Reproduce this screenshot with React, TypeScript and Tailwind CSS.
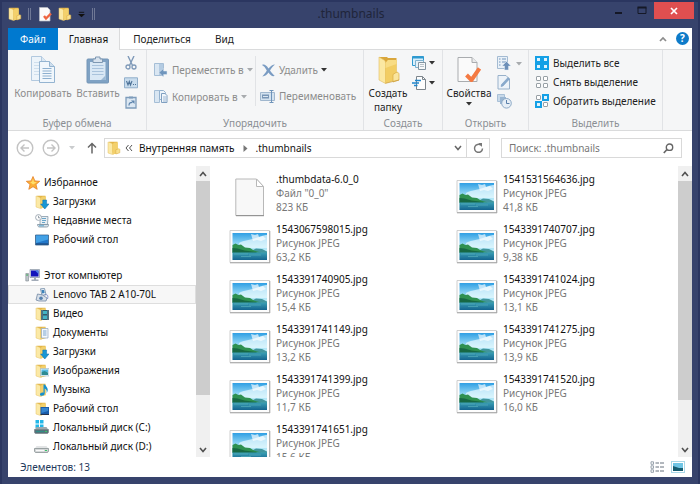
import { ReactNode } from "react";

type FolderKind = "plain" | "download" | "video" | "docs" | "pictures" | "music" | "desktop";

const favorites = [
  { label: "Загрузки", icon: <SmallFolder kind="download" /> },
  { label: "Недавние места", icon: <RecentIcon /> },
  { label: "Рабочий стол", icon: <DesktopIcon /> },
];

const computer = [
  { label: "Lenovo TAB 2 A10-70L", icon: <TabletIcon />, selected: true },
  { label: "Видео", icon: <SmallFolder kind="video" /> },
  { label: "Документы", icon: <SmallFolder kind="docs" /> },
  { label: "Загрузки", icon: <SmallFolder kind="download" /> },
  { label: "Изображения", icon: <SmallFolder kind="pictures" /> },
  { label: "Музыка", icon: <SmallFolder kind="music" /> },
  { label: "Рабочий стол", icon: <SmallFolder kind="desktop" /> },
  { label: "Локальный диск (C:)", icon: <DiskIcon system /> },
  { label: "Локальный диск (D:)", icon: <DiskIcon /> },
];

const files = [
  { name: ".thumbdata-6.0_0", type: 'Файл "0_0"', size: "823 КБ" },
  { name: "1541531564636.jpg", type: "Рисунок JPEG", size: "41,8 КБ" },
  { name: "1543067598015.jpg", type: "Рисунок JPEG", size: "63,2 КБ" },
  { name: "1543391740707.jpg", type: "Рисунок JPEG", size: "9,38 КБ" },
  { name: "1543391740905.jpg", type: "Рисунок JPEG", size: "15,4 КБ" },
  { name: "1543391741024.jpg", type: "Рисунок JPEG", size: "13,1 КБ" },
  { name: "1543391741149.jpg", type: "Рисунок JPEG", size: "13,2 КБ" },
  { name: "1543391741275.jpg", type: "Рисунок JPEG", size: "13,9 КБ" },
  { name: "1543391741399.jpg", type: "Рисунок JPEG", size: "11,7 КБ" },
  { name: "1543391741520.jpg", type: "Рисунок JPEG", size: "16,0 КБ" },
  { name: "1543391741651.jpg", type: "Рисунок JPEG", size: "15,6 КБ" },
];

/* Icons */

function SmallFolder({ kind = "plain" }: { kind?: FolderKind }) {
  return (
    <svg width="14" height="14" viewBox="0 0 14 14">
      <path d="M2 .8h8.500v10.700L6 13.500z" fill="#e2b548" />
      <path d="M1 1l3.500 1.200c.7.300 1 .8 1 1.500v9.800L1 12z" fill="#fbe9a6" stroke="#e6c265" strokeWidth=".5" />
      <path d="M5.500 3L7.500 1.500h3.300v10.800l-5.300 1.200z" fill="#f3d06b" />
      {kind === "plain" && <path d="M8.800 8.800l2.700-1c.8-.2 1.300.2 1.300 1v3l-4 1.200z" fill="#fae08e" stroke="#d7a93e" strokeWidth=".5" />}
      {kind === "download" && <path d="M7.800 5h3.800v4H14l-4.200 5-4.200-5h2.200z" fill="#1897d4" stroke="#0b6fae" strokeWidth=".5" />}
      {kind === "video" && (
        <>
          <path d="M6 3h8v10H6z" fill="#31596b" />
          <path d="M8 4h4v3H8zM8 8.500h4v3.500H8z" fill="#45b4c4" />
          <path d="M7 3.500v9.500M13 3.500v9.500" stroke="#dfe9ec" strokeWidth=".7" strokeDasharray="1 1" />
        </>
      )}
      {kind === "docs" && (
        <>
          <path d="M6.500 2.500h6.500v9.500H6.500z" fill="#f4f8fc" stroke="#8ca5bf" strokeWidth=".7" />
          <path d="M8 5h3.500M8 7h3.500M8 9h3.500" stroke="#5b8fc4" strokeWidth=".8" />
        </>
      )}
      {kind === "pictures" && (
        <>
          <path d="M5.500 4.500H14V12H5.500z" fill="#e8f5fb" stroke="#9ab6c6" strokeWidth=".6" />
          <path d="M6.500 5.500H13V8H6.500z" fill="#56bbe2" />
          <path d="M6.500 8l3-1 3.500 1.500V11H6.500z" fill="#2d8b93" />
        </>
      )}
      {kind === "music" && (
        <path d="M8.500 1.500v8.200c-2-.6-3.700.5-3.500 2 .3 1.700 4.700 1.300 4.700-1.200V5.500c2 1 2.300 2.500 1.800 4.500C14 7 12.500 4.500 9.700 1.500z" fill="#1590cf" />
      )}
      {kind === "desktop" && (
        <>
          <path d="M5.500 5H14v7.500H5.500z" fill="#1a5ca8" />
          <path d="M6.500 6H13v3l-6.500 2z" fill="#3585d0" />
          <path d="M5.500 12h8.500v1H5.500z" fill="#26344d" />
        </>
      )}
    </svg>
  );
}

function RecentIcon() {
  return (
    <svg width="14" height="14" viewBox="0 0 14 14">
      <path d="M5 2.500h8l-.5 8H5z" fill="#e7eef3" stroke="#8799a8" strokeWidth=".8" />
      <path d="M7 4.500h4M7 6.500h4M7 8.500h3" stroke="#6aa5c9" />
      <circle cx="3.500" cy="3.500" r="2.900" fill="#fff" stroke="#98a4ae" strokeWidth=".9" />
      <path d="M3.500 1.800v2H5" fill="none" stroke="#6d7a86" strokeWidth=".7" />
      <path d="M2.500 10.500h11v1c0 1-1 1.500-2 1.500h-7c-1.200 0-2-1-2-2.500z" fill="#d9e3ea" stroke="#7b8e9d" strokeWidth=".8" />
      <path d="M4 11.800h5" stroke="#5ba5cf" />
    </svg>
  );
}

function DesktopIcon() {
  return (
    <svg width="14" height="14" viewBox="0 0 14 14">
      <path d="M.5 2h13v10H.5z" fill="#2277c9" stroke="#3a6389" strokeWidth=".8" />
      <path d="M1 2.500h12v4L1 10z" fill="#42a1e6" />
      <path d="M1 11h12" stroke="#1c3f6a" />
    </svg>
  );
}

function TabletIcon() {
  return (
    <svg width="14" height="14" viewBox="0 0 14 14">
      <path d="M5.500.8l4-.3 1.500 6-4 1z" fill="#e9f0f6" stroke="#6f89a4" strokeWidth=".8" />
      <path d="M6.500 2h2.500l.7 3-2.500.5z" fill="#3e83ba" />
      <path d="M2.500 6l5 1 4.500 3-1 3H4l-3-1z" fill="#d7dfe8" stroke="#7389a5" strokeWidth=".8" />
      <circle cx="6" cy="10.300" r="1.800" fill="#537fae" />
      <path d="M9.500 7c3-1 4 .5 3 4" fill="none" stroke="#6c7fc0" strokeWidth=".8" />
    </svg>
  );
}

function DiskIcon({ system = false }: { system?: boolean }) {
  return (
    <svg width="15" height="15" viewBox="0 0 15 15">
      {system && <path d="M1.500 0h3.500v3.500H1.500zM6 0h3.500v3.500H6zM1.500 4.500h3.500V8H1.500zM6 4.500h3.500V8H6z" fill="#22b7e8" />}
      <path d="M2.500 7h10l2 3H.5z" fill={system ? "#9ca9ae" : "#e2e4e5"} />
      <path d="M.5 9.500h14v2.500c0 1-.8 1.500-1.500 1.500H2c-.8 0-1.500-.5-1.500-1.500z" fill={system ? "#57717a" : "#d1d4d5"} stroke="#7d8688" strokeWidth=".7" />
      <path d="M2 11.500h8" stroke={system ? "#318c86" : "#f9f9f9"} strokeWidth="1.200" />
      <path d="M11 11.500h2" stroke="#35c567" strokeWidth="1.200" />
    </svg>
  );
}

function StarIcon() {
  return (
    <svg width="14" height="14" viewBox="0 0 14 14">
      <path d="M7 .5l1.900 4.400 4.800.4L10 8.500l1.200 4.800L7 10.700l-4.200 2.600L4 8.500.3 5.300l4.800-.4z" fill="#fbaf36" stroke="#e5812a" strokeWidth=".8" />
      <path d="M7 2.500l1 3.500 3 .3-4 2.200-3-2.500 2-.2z" fill="#ffdf6c" />
    </svg>
  );
}

function ComputerIcon() {
  return (
    <svg width="15" height="14" viewBox="0 0 15 14">
      <path d="M5 .5h9.500v8H5z" fill="#d7dde5" stroke="#8893a3" strokeWidth=".7" />
      <path d="M6 1.500h7.500v6H6z" fill="#1414bb" />
      <path d="M10 1.500h3.500V5z" fill="#4e83e4" />
      <path d="M9 8.500h2v2H9zM6.500 10.500h7V12h-7z" fill="#a3acb8" />
      <path d="M.8 4.500h2.700V12H.8z" fill="#c0c7cc" stroke="#7d878e" strokeWidth=".6" />
      <path d="M1.500 6h1.200" stroke="#2eaa4a" strokeWidth="1.500" />
    </svg>
  );
}

function PropertiesSmall() {
  return (
    <svg width="13" height="15" viewBox="0 0 13 15">
      <path d="M.5.5h8l2.500 2.500v11H.5z" fill="#fbfbfb" stroke="#b9bcc4" strokeWidth=".7" />
      <path d="M5 9l2 2.500L12 6.500" fill="none" stroke="#ee6541" strokeWidth="2.400" />
    </svg>
  );
}

function CopyIcon() {
  return (
    <svg width="26" height="28" viewBox="0 0 26 28">
      <path d="M1.500.5h10l5 5v19h-15z" fill="#edf4fa" stroke="#b2c9df" />
      <path d="M11.500.5v5h5" fill="#dbe8f3" stroke="#b2c9df" />
      <path d="M4 6.500h6M4 9.500h5M4 12.500h5M4 15.500h5M4 18.500h5" stroke="#cfdfed" />
      <path d="M9.500 5.500h10l5 5v16h-15z" fill="#f1f7fc" stroke="#94b4d1" />
      <path d="M19.500 5.500v5h5" fill="#cfdfee" stroke="#94b4d1" />
      <path d="M12.500 12.500h9M12.500 15h9M12.500 17.500h9M12.500 20h9M12.500 22.500h9" stroke="#8cafcf" />
    </svg>
  );
}

function PasteIcon() {
  return (
    <svg width="24" height="28" viewBox="0 0 24 28">
      <rect x="1" y="3" width="21.500" height="24" rx="1" fill="#7fa2c4" stroke="#7596b7" />
      <path d="M4 6h15.500v18H4z" fill="#d9e8f5" />
      <path d="M6 9.500h11.500M6 12.500h11.500M6 15.500h11.500M6 18.500h11.500" stroke="#a9c3dc" />
      <path d="M15 24l4.500-4.500V24z" fill="#9bb9d5" />
      <path d="M7 3h2.500V1h4.500v2h2.500v3.500H7z" fill="#d8e3ee" stroke="#7e98b2" />
    </svg>
  );
}

function CutIcon() {
  return (
    <svg width="14" height="14" viewBox="0 0 14 14" fill="none" stroke="#7e99b8">
      <path d="M4 0l4.500 9.500M10 0L5.500 9.500" strokeWidth="1.400" />
      <circle cx="4" cy="11" r="2" strokeWidth="1.300" />
      <circle cx="10" cy="11" r="2" strokeWidth="1.300" />
    </svg>
  );
}

function PathIcon() {
  return (
    <svg width="14" height="12" viewBox="0 0 14 12">
      <path d="M.5.8h13v10H.5z" fill="#c8dced" stroke="#91aeca" />
      <path d="M2.500 4l1.500 4 1.300-3.500L6.500 8 8 4" fill="none" stroke="#4f7398" strokeWidth="1.100" />
      <path d="M9 7.500h3" stroke="#4f7398" strokeDasharray="1 1" />
    </svg>
  );
}

function ShortcutIcon() {
  return (
    <svg width="12" height="13" viewBox="0 0 12 13">
      <path d="M1 1.500h10V12H1z" fill="#dbe7f2" stroke="#7e9cbb" strokeWidth="1.300" />
      <path d="M4 .5h4v2H4z" fill="#7e9cbb" />
      <path d="M4 9.500c0-2.500 1-3.200 3.500-3.200" fill="none" stroke="#5c83ac" strokeWidth="1.200" />
      <path d="M6 4.500h3.500V8z" fill="#5c83ac" />
    </svg>
  );
}

function MoveToIcon() {
  return (
    <svg width="14" height="16" viewBox="0 0 14 16">
      <path d="M.5 1.500h9v12h-9z" fill="#d9e6f2" stroke="#a5bed6" />
      <path d="M5 2h4v11H5z" fill="#b3cbe2" />
      <path d="M5 10.500L9.500 6.500V9H13v3.500H9.500V15z" fill="#6f95bd" stroke="#dfe9f3" strokeWidth=".5" />
    </svg>
  );
}

function CopyToIcon() {
  return (
    <svg width="14" height="15" viewBox="0 0 14 15">
      <path d="M.5 1.500h5v12h-5z" fill="#d9e6f2" stroke="#a5bed6" />
      <path d="M5.500 1.500h4l2 2v7h-6z" fill="#edf4fa" stroke="#94b2cf" />
      <path d="M7.500 4.500h3.500l2 2v7h-5.500z" fill="#f0f6fb" stroke="#7f9fc0" />
      <path d="M9 8h3M9 10h3M9 12h3" stroke="#8aaacb" strokeWidth=".8" />
    </svg>
  );
}

function DeleteIcon() {
  return (
    <svg width="13" height="13" viewBox="0 0 13 13">
      <path d="M0 1c2-1 3.800-.5 6.500 3.500C9 1.800 10.500.5 13 .5 10.500 2.500 9.300 4.500 8 6.500c1.500 2 2.700 3.500 4.700 5.500-2.800.7-4.500-1-6.200-3.500C5 10.500 3.200 12.300.3 12.500 2.500 10 3.800 8.500 4.800 6.500 3.300 3.800 2 2 0 1z" fill="#7a9cc3" />
    </svg>
  );
}

function RenameIcon() {
  return (
    <svg width="16" height="13" viewBox="0 0 16 13">
      <path d="M.5 2.500h14v8H.5z" fill="#d3e2ef" stroke="#a0b7ce" />
      <path d="M2 4.500h7v4H2z" fill="#7896b6" />
      <path d="M3 6.500h5" stroke="#dae6f1" />
      <path d="M9.500.5h4M11.500.5v12M9.500 12.500h4" stroke="#6f94ba" />
    </svg>
  );
}

function NewFolderIcon() {
  return (
    <svg width="24" height="28" viewBox="0 0 24 28">
      <path d="M3 1h8l1 1h8.500v21L8 27z" fill="#d9a63c" />
      <path d="M3 1l5 3c1 .7 1.500 1.500 1.500 3v20.500L3 24z" fill="#fbe8a2" stroke="#e3be61" strokeWidth=".6" />
      <path d="M9.500 7l2.500-3h8.500v20L9.500 27.500z" fill="#f2cd63" />
      <path d="M9.500 7l2.500-3h8.500v4L9.500 12z" fill="#f8dc84" />
      <path d="M17 18.500l3-2c1.800-.8 3 .3 3 2V24l-6 2z" fill="#fae59d" stroke="#d8ac42" strokeWidth=".7" />
      <path d="M9.500 27.300L23 24" stroke="#c99a38" strokeWidth=".7" />
    </svg>
  );
}

function NewItemIcon() {
  return (
    <svg width="15" height="14" viewBox="0 0 15 14">
      <path d="M.5.5h11v9H.5z" fill="#d9effb" stroke="#2f9ad0" />
      <path d="M.5 1.500h11" stroke="#2f9ad0" strokeWidth="2" />
      <path d="M3.500 4.500h8v7h-8z" fill="#e6f2f9" stroke="#7fb2d0" />
      <path d="M6.500 6.500h7v7h-7z" fill="#f7f9fa" stroke="#82939f" />
      <path d="M8 8.500h4M8 10.500h4" stroke="#a6b2bb" strokeWidth=".8" />
    </svg>
  );
}

function EasyAccessIcon() {
  return (
    <svg width="15" height="14" viewBox="0 0 15 14">
      <path d="M4.500.5h6l3 3v10h-9z" fill="#fdfdfd" stroke="#7c858c" />
      <path d="M10.500.5v3h3" fill="none" stroke="#7c858c" />
      <path d="M3 4.500h6M0 7h7M2 9.500h3.500" stroke="#1f86cd" strokeWidth="1.500" />
    </svg>
  );
}

function PropertiesIcon() {
  return (
    <svg width="24" height="28" viewBox="0 0 24 28">
      <path d="M1 1.500h14l5 5v19H1z" fill="#fafafa" stroke="#a9acaf" />
      <path d="M15 1.500v5h5" fill="#e9eaeb" stroke="#a9acaf" />
      <path d="M9.500 19l5 5L22.500 12.500" fill="none" stroke="#f47a43" strokeWidth="4" strokeLinejoin="round" />
    </svg>
  );
}

function OpenIcon() {
  return (
    <svg width="15" height="15" viewBox="0 0 15 15">
      <path d="M.5.5h10v12H.5z" fill="#e9f1f8" stroke="#a4bbd2" />
      <path d="M2 3h1.500M5 3h4M2 6h1.500M5 6h4M2 9h1.500" stroke="#7396bb" strokeWidth="1.200" />
      <path d="M9.500 5.500l4.500 4.500h-2.500v4h-4v-4H5z" fill="#6c8fb8" stroke="#e3ecf4" strokeWidth=".5" />
    </svg>
  );
}

function EditIcon() {
  return (
    <svg width="14" height="15" viewBox="0 0 14 15">
      <path d="M1 .5h8l3.500 3.500v10H1z" fill="#edf3f9" stroke="#98b1ca" />
      <path d="M4 11.500l.5-2 6.500-7 1.500 1.500L6 11z" fill="#8aabcd" stroke="#6f93ba" strokeWidth=".5" />
    </svg>
  );
}

function HistoryIcon() {
  return (
    <svg width="15" height="15" viewBox="0 0 15 15">
      <path d="M.5.5h7v7h-7z" fill="#c8d9e9" stroke="#a9c0d7" />
      <path d="M3 3h6v7H3z" fill="#9ab6d2" />
      <circle cx="9.500" cy="9.300" r="4.800" fill="#e6eef6" stroke="#8da9c6" />
      <path d="M9.500 6v3.500h3" fill="none" stroke="#5b80aa" />
    </svg>
  );
}

function SelectIcon({ filled }: { filled: boolean[] }) {
  return (
    <svg width="14" height="14" viewBox="0 0 14 14">
      {filled.map((on, i) => {
        const x = (i % 2) * 7;
        const y = Math.floor(i / 2) * 7;
        return on ? (
          <rect key={i} x={x + 1} y={y + 1} width="5" height="5" fill="#dff3fd" stroke="#14a0e6" strokeWidth="2" />
        ) : (
          <rect key={i} x={x + 1.5} y={y + 1.5} width="4" height="4" rx=".5" fill="#fff" stroke="#98a0a6" />
        );
      })}
    </svg>
  );
}

function DocumentIcon() {
  return (
    <svg width="30" height="39" viewBox="0 0 30 39">
      <path d="M.8 1h20.700l7 7.500v29H.8z" fill="#f8f8f8" stroke="#b8b8b8" />
      <path d="M21.500 1v7.500h7z" fill="#fff" stroke="#b8b8b8" />
      <path d="M1 37.700h28" stroke="#8c8c8c" />
    </svg>
  );
}

function PictureIcon() {
  return (
    <svg width="42" height="34" viewBox="0 0 42 34">
      <defs>
        <linearGradient id="sky" x1="0" y1="0" x2="0" y2="1">
          <stop offset="0" stopColor="#2f9fe4" />
          <stop offset=".5" stopColor="#a9e4f7" />
          <stop offset="1" stopColor="#d9f6fb" />
        </linearGradient>
        <linearGradient id="lake" x1="0" y1="0" x2="0" y2="1">
          <stop offset="0" stopColor="#3a9fb4" />
          <stop offset="1" stopColor="#14648f" />
        </linearGradient>
      </defs>
      <path d="M1 .5h39.500v32H1z" fill="#fdfdfd" stroke="#cfcfcf" />
      <path d="M1 32.800h40M40.800 1v32" stroke="#a5a5a5" />
      <path d="M3.500 3h34.500v27H3.500z" fill="url(#sky)" />
      <path d="M10 13c5-3 11-3 17-5s8-3 11-3v13H10z" fill="#e9fafe" opacity=".7" />
      <path d="M22 4l4 1 3-1 1 3 4-1 3 3-5 2-4-1-4 1z" fill="#fff" opacity=".65" />
      <path d="M22 21l5-2.500 6 .5 5 2.500v2H22z" fill="#41959d" />
      <path d="M3.500 15l3-1.500 3 1.500 2.500-.5 4 3 5 .5 4 2.500 7 2H3.500z" fill="#2f9150" />
      <path d="M3.500 18l5 .5 7 2 12 1.500v1h-24z" fill="#176844" />
      <path d="M3.500 22.500H38V30H3.500z" fill="url(#lake)" />
      <path d="M5 24h14M20 25h12M12 26.500h10" stroke="#5bb3bd" strokeWidth=".6" />
    </svg>
  );
}

function Caret({ light = false }: { light?: boolean }) {
  return (
    <svg width="6" height="4" viewBox="0 0 6 4" className="shrink-0">
      <path d="M0 0h6L3 3.500z" fill={light ? "#a8abae" : "#333"} />
    </svg>
  );
}

/* Ribbon parts */

function Group({ title, className, children }: { title: string; className: string; children: ReactNode }) {
  return (
    <section className={`flex shrink-0 flex-col border-r border-[#e1e3e6] ${className}`}>
      <div className="flex flex-1 pt-1.5">{children}</div>
      <h2 className="h-[14px] text-center text-[10px] leading-[14px] text-[#8b8f94]">{title}</h2>
    </section>
  );
}

function BigButton({ icon, disabled, className, children }: { icon: ReactNode; disabled?: boolean; className?: string; children: ReactNode }) {
  return (
    <button disabled={disabled} className={`flex flex-col items-center gap-0.5 text-[10px] leading-[14px] disabled:text-[#8c8c8c] ${className}`}>
      {icon}
      <span className="flex flex-col items-center whitespace-nowrap">{children}</span>
    </button>
  );
}

function RowButton({ icon, disabled, caret, children }: { icon: ReactNode; disabled?: boolean; caret?: ReactNode; children: ReactNode }) {
  return (
    <button disabled={disabled} className="flex items-center gap-[3px] text-[10px] leading-[14px] whitespace-nowrap disabled:text-[#8c8c8c]">
      <span className="flex w-4 shrink-0 justify-center">{icon}</span>
      {children}
      {caret}
    </button>
  );
}

function Ribbon() {
  return (
    <div className="flex h-[81px] shrink-0 overflow-hidden border-b border-[#dadbdc] bg-[#f5f6f7]">
      <Group title="Буфер обмена" className="w-[139px]">
        <BigButton icon={<CopyIcon />} disabled className="w-[70px]">Копировать</BigButton>
        <BigButton icon={<PasteIcon />} disabled className="w-[40px]">Вставить</BigButton>
        <div className="ml-1.5 flex flex-col items-center gap-[7px]">
          <button aria-label="Вырезать"><CutIcon /></button>
          <button aria-label="Скопировать путь"><PathIcon /></button>
          <button aria-label="Вставить ярлык"><ShortcutIcon /></button>
        </div>
      </Group>

      <Group title="Упорядочить" className="w-[217px]">
        <div className="flex h-[50px] w-[109px] flex-col gap-[11px] border-r border-[#e1e3e6] pt-1.5 pl-1.5">
          <RowButton icon={<MoveToIcon />} disabled caret={<Caret light />}>Переместить в</RowButton>
          <RowButton icon={<CopyToIcon />} disabled caret={<Caret light />}>Копировать в</RowButton>
        </div>
        <div className="flex h-[50px] flex-col gap-3 pt-[7px] pl-1">
          <RowButton icon={<DeleteIcon />} disabled caret={<Caret />}>Удалить</RowButton>
          <RowButton icon={<RenameIcon />} disabled>Переименовать</RowButton>
        </div>
      </Group>

      <Group title="Создать" className="w-[79px]">
        <BigButton icon={<NewFolderIcon />} className="w-[48px] text-[#1e1e1e]">
          <span>Создать</span>
          <span>папку</span>
        </BigButton>
        <div className="flex flex-col gap-1.5">
          <button aria-label="Создать элемент" className="flex items-center gap-0.5"><NewItemIcon /><Caret /></button>
          <button aria-label="Простой доступ" className="flex items-center gap-0.5"><EasyAccessIcon /><Caret /></button>
        </div>
      </Group>

      <Group title="Открыть" className="w-[86px]">
        <BigButton icon={<PropertiesIcon />} className="w-[52px] text-[#1e1e1e]">
          <span className="pb-0.5">Свойства</span>
          <Caret />
        </BigButton>
        <div className="ml-0.5 flex flex-col gap-1">
          <button aria-label="Открыть" className="flex items-center gap-1"><OpenIcon /><Caret light /></button>
          <button aria-label="Изменить"><EditIcon /></button>
          <button aria-label="Журнал"><HistoryIcon /></button>
        </div>
      </Group>

      <Group title="Выделить" className="w-[134px] text-[#1e1e1e]">
        <div className="flex flex-col gap-[5px] pl-[5px]">
          <RowButton icon={<SelectIcon filled={[true, true, true, true]} />}>Выделить все</RowButton>
          <RowButton icon={<SelectIcon filled={[false, false, false, false]} />}>Снять выделение</RowButton>
          <RowButton icon={<SelectIcon filled={[false, true, true, false]} />}>Обратить выделение</RowButton>
        </div>
      </Group>
    </div>
  );
}

function ScrollBar({ thumb }: { thumb: string }) {
  return (
    <div className="flex w-[14px] shrink-0 flex-col bg-[#f0f0f0]">
      <button aria-label="Вверх" className="flex h-[15px] shrink-0 items-center justify-center">
        <svg width="8" height="6" viewBox="0 0 8 6"><path d="M1 5l3-3.500L7 5" fill="none" stroke="#505050" strokeWidth="1.600" /></svg>
      </button>
      <div className="flex-1">
        <div className={`bg-[#cdcdcd] ${thumb}`} />
      </div>
      <button aria-label="Вниз" className="flex h-[15px] shrink-0 items-center justify-center">
        <svg width="8" height="6" viewBox="0 0 8 6"><path d="M1 1l3 3.500L7 1" fill="none" stroke="#505050" strokeWidth="1.600" /></svg>
      </button>
    </div>
  );
}

function TreeRow({ icon, label, top, selected }: { icon: ReactNode; label: string; top?: boolean; selected?: boolean }) {
  return (
    <li>
      <button
        className={`flex h-[19px] w-full items-center gap-1 border text-[10px] whitespace-nowrap ${top ? "pl-4" : "pl-[25px]"} ${
          selected ? "border-[#dedede] bg-[#f7f7f7]" : "border-transparent"
        }`}
      >
        <span className="flex w-[15px] shrink-0 justify-center">{icon}</span>
        {label}
      </button>
    </li>
  );
}

export default function App() {
  return (
    <div className="flex h-screen flex-col border-x-2 border-t-2 border-[#2b3660] bg-[#37436c] px-1.5 pb-[7px] font-['Noto_Sans','Liberation_Sans',sans-serif] text-[#111]">
      {/* Title bar */}
      <header className="flex h-[26px] shrink-0 items-start">
        <div className="flex h-[24px] flex-1 items-center">
          <SmallFolder />
          <span className="ml-1.5 h-3 w-[3px] border-x border-[#6f7895]" />
          <button aria-label="Свойства" className="ml-2"><PropertiesSmall /></button>
          <button aria-label="Новая папка" className="ml-1.5"><SmallFolder /></button>
          <button aria-label="Настройка панели" className="ml-1.5">
            <svg width="7" height="7" viewBox="0 0 8 7"><path d="M1 1h6" stroke="#111" /><path d="M0 3h8L4 6.500z" fill="#111" /></svg>
          </button>
          <span className="ml-[7px] h-3 w-[3px] border-x border-[#6f7895]" />
        </div>
        <h1 className="text-[12px] leading-[24px] text-[#20253a]">.thumbnails</h1>
        <div className="-mr-0.5 flex flex-1 justify-end">
          <button aria-label="Свернуть" className="flex h-[17px] w-6 items-center justify-center">
            <svg width="9" height="9" viewBox="0 0 9 9"><path d="M1 7h7" stroke="#151826" strokeWidth="2" /></svg>
          </button>
          <button aria-label="Развернуть" className="flex h-[17px] w-6 items-center justify-center">
            <svg width="10" height="9" viewBox="0 0 10 9"><path d="M1 1.500h8v6H1z" fill="none" stroke="#151826" /><path d="M.5 1.500h9" stroke="#151826" strokeWidth="2" /></svg>
          </button>
          <button aria-label="Закрыть" className="flex h-[17px] w-10 items-center justify-center bg-[#e04f50]">
            <svg width="8" height="8" viewBox="0 0 8 8"><path d="M1 1l6 6M7 1L1 7" stroke="#fff" strokeWidth="1.700" /></svg>
          </button>
        </div>
      </header>

      <main className="flex min-h-0 flex-1 flex-col bg-white">
        {/* Ribbon tabs */}
        <nav className="flex h-[22px] shrink-0 text-[10px] leading-[22px]">
          <button className="w-[50px] bg-[#0079cf] text-white">Файл</button>
          <button className="w-[62px] border-r border-[#dadbdc] bg-[#f5f6f7]">Главная</button>
          <div className="flex flex-1 items-center border-b border-[#dadbdc] text-[#222]">
            <button className="w-[84px]">Поделиться</button>
            <button className="w-[41px]">Вид</button>
            <button aria-label="Свернуть ленту" className="ml-auto">
              <svg width="8" height="6" viewBox="0 0 8 6"><path d="M1 5l3-3 3 3" fill="none" stroke="#8c8c8c" strokeWidth="1.700" /></svg>
            </button>
            <button aria-label="Справка" className="mr-[3px] ml-[9px] size-[13px] rounded-full bg-[#0e7bc9] leading-[13px] font-bold text-white">?</button>
          </div>
        </nav>

        <Ribbon />

        {/* Address and search */}
        <div className="flex h-[35px] shrink-0 items-start pt-[7px] pr-[10px] pl-2">
          <div className="flex h-[20px] w-[88px] items-center">
            <button aria-label="Назад">
              <svg width="18" height="18" viewBox="0 0 18 18" fill="none" stroke="#c3c3c3" strokeWidth="1.400"><circle cx="9" cy="9" r="7.800" /><path d="M13 9H5M8.500 5.500L5 9l3.500 3.500" /></svg>
            </button>
            <button aria-label="Вперед" className="ml-2">
              <svg width="18" height="18" viewBox="0 0 18 18" fill="none" stroke="#c3c3c3" strokeWidth="1.400"><circle cx="9" cy="9" r="7.800" /><path d="M5 9h8M9.500 5.500L13 9l-3.500 3.500" /></svg>
            </button>
            <button aria-label="Последние расположения" className="ml-[9px] opacity-60"><Caret light /></button>
            <button aria-label="Вверх на один уровень" className="ml-3">
              <svg width="10" height="12" viewBox="0 0 10 12"><path d="M5 11.500V1.500M1 5.500l4-4 4 4" fill="none" stroke="#666" strokeWidth="1.500" /></svg>
            </button>
          </div>
          <div className="flex h-[20px] flex-1 items-stretch border border-[#d9d9d9] text-[10px]">
            <div className="flex flex-1 items-center pl-0.5">
              <SmallFolder />
              <svg width="8" height="6" viewBox="0 0 8 6" className="ml-1"><path d="M3.500 0L1 3l2.500 3M7 0L4.500 3 7 6" fill="none" stroke="#555" /></svg>
              <a href="#memory" className="ml-1.5">Внутренняя память</a>
              <svg width="5" height="7" viewBox="0 0 5 7" className="ml-2"><path d="M.5 0L4.500 3.500.5 7z" fill="#777" /></svg>
              <a href="#thumbnails" className="ml-2">.thumbnails</a>
            </div>
            <button aria-label="Показать список" className="flex w-[17px] items-center justify-center">
              <svg width="8" height="6" viewBox="0 0 8 6"><path d="M1 1l3 3.500L7 1" fill="none" stroke="#666" strokeWidth="1.500" /></svg>
            </button>
            <button aria-label="Обновить" className="flex w-[23px] items-center justify-center border-l border-[#d9d9d9]">
              <svg width="11" height="11" viewBox="0 0 11 11"><path d="M8 2.200A4 4 0 1 0 9.500 5.500" fill="none" stroke="#777" strokeWidth="1.500" /><path d="M5.500 0H9v4z" fill="#777" /></svg>
            </button>
          </div>
          <label className="ml-[11px] flex h-[20px] w-[181px] items-center border border-[#d9d9d9] pr-[7px] pl-[7px]">
            <input type="search" aria-label="Поиск" placeholder="Поиск: .thumbnails" className="min-w-0 flex-1 text-[10px] outline-none placeholder:text-[#777]" />
            <svg width="11" height="11" viewBox="0 0 11 11"><circle cx="6.500" cy="4.200" r="3.200" fill="none" stroke="#666" strokeWidth="1.400" /><path d="M4 6.500L.8 10" stroke="#666" strokeWidth="1.700" /></svg>
          </label>
        </div>

        <div className="flex min-h-0 flex-1">
          {/* Navigation tree */}
          <aside className="flex w-[202px] shrink-0">
            <div className="flex-1 overflow-hidden pt-[7px]">
              <ul>
                <TreeRow top icon={<StarIcon />} label="Избранное" />
                {favorites.map((item) => (
                  <TreeRow key={item.label} {...item} />
                ))}
              </ul>
              <ul className="mt-[17px]">
                <TreeRow top icon={<ComputerIcon />} label="Этот компьютер" />
                {computer.map((item) => (
                  <TreeRow key={item.label} {...item} />
                ))}
              </ul>
            </div>
            <ScrollBar thumb="h-[82%]" />
          </aside>

          {/* Files */}
          <ul className="grid min-w-0 flex-1 auto-rows-[50px] grid-cols-[227px_1fr] overflow-hidden pt-1.5 pl-[18px]">
            {files.map((file) => (
              <li key={file.name} className="flex items-center">
                <span className="flex w-[43px] shrink-0 justify-center">
                  {file.name.endsWith(".jpg") ? <PictureIcon /> : <DocumentIcon />}
                </span>
                <div className="ml-[5px] self-start text-[10px] leading-[14px] whitespace-nowrap text-[#777]">
                  <p className="text-[#111]">{file.name}</p>
                  <p>{file.type}</p>
                  <p>{file.size}</p>
                </div>
              </li>
            ))}
          </ul>
          <ScrollBar thumb="h-[84%]" />
        </div>

        {/* Status bar */}
        <footer className="flex h-5 shrink-0 items-center justify-between pr-[7px] pl-3 text-[10px] text-[#1e395b]">
          <span>Элементов: 13</span>
          <div className="flex gap-[7px]">
            <button aria-label="Таблица">
              <svg width="14" height="12" viewBox="0 0 14 12">
                <path d="M1 .8h2.500v2.500H1zM1 4.800h2.500v2.500H1zM1 8.800h2.500v2.500H1z" fill="#fff" stroke="#8f9aa5" strokeWidth=".9" />
                <path d="M5.500 2H9M10 2h4M5.500 6H9M10 6h4M5.500 10H9M10 10h4" stroke="#66717c" />
              </svg>
            </button>
            <button aria-label="Крупные значки" className="border border-[#a9d8e8] p-px">
              <svg width="10" height="8" viewBox="0 0 10 8"><path d="M0 0h10v8H0z" fill="#6ec4e4" /><path d="M0 3l3 1 3 1h4v3H0z" fill="#145c70" /></svg>
            </button>
          </div>
        </footer>
      </main>
    </div>
  );
}
